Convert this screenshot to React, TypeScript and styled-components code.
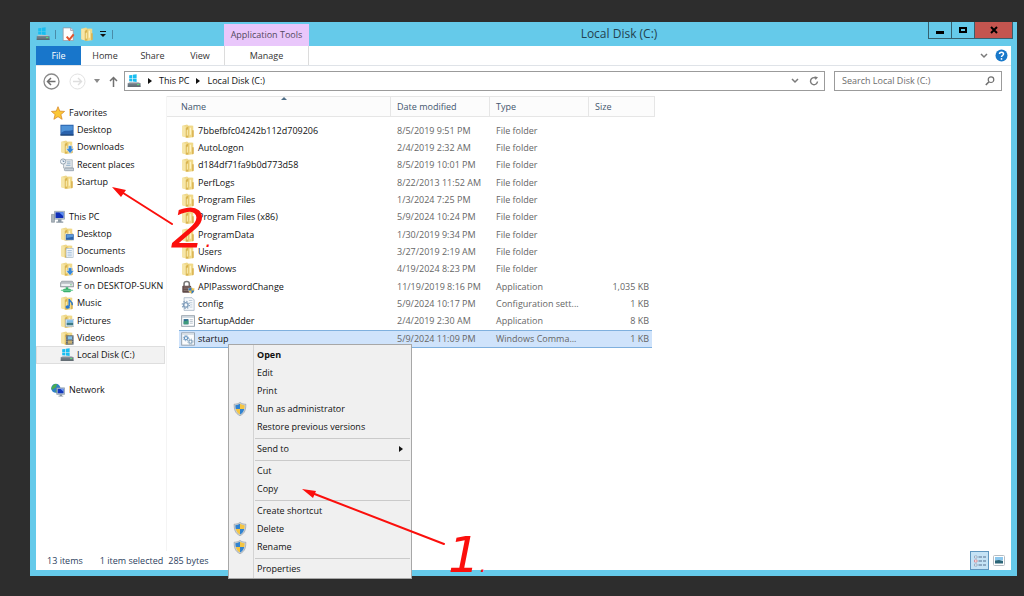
import React from 'react';
import styled, { createGlobalStyle, css } from 'styled-components';

const RED = '#fb0f0c';

const GlobalStyle = createGlobalStyle`
  * { box-sizing: border-box; }
  body {
    margin: 0;
    background: #2d2d2d;
    font-family: 'Open Sans', 'Noto Sans', sans-serif;
    font-size: 9px;
    line-height: 16px;
    color: #111;
  }
  button, input { font: inherit; color: inherit; }
  a { color: inherit; text-decoration: none; }
`;

/* ---------- icons ---------- */

type IconName =
  | 'folder' | 'desktop' | 'downloads' | 'recent' | 'pc' | 'folderDesktop' | 'documents'
  | 'netdrive' | 'music' | 'pictures' | 'videos' | 'disk' | 'network' | 'star' | 'lock'
  | 'config' | 'app' | 'batch' | 'shield' | 'props';

const FolderShape = () => (
  <g>
    <path d="M1.500 2 7 .5 8.500 2H14v13l-6 .8L1.500 14z" fill="#efd88a" />
    <path d="M1.500 2 5.500 3v12.500L1.500 14z" fill="#f6e6a8" />
    <path d="M8.500 2H13v12.500l-4.500 1z" fill="#f1d988" />
    <path d="M5.500 4.500 8.500 2.500v12.800l-3 .4z" fill="#d9b450" />
    <path d="M6.500 7 8 6v7l-1.500 .5z" fill="#f7e7a6" />
    <path d="M10 4.500 11.500 4v8l-1.500 .5z" fill="#fff3c4" />
    <path d="M12.800 7h1.700v7.700l-1.700 .3z" fill="#d8ae4a" />
  </g>
);

const DiskShape = () => (
  <g>
    <path d="M2.500 1.500 6 1v3.500H2.500zM6.700 .9 11 .3v4.200H6.700zM2.500 5.200H6v3.500l-3.500-.4zM6.700 5.200H11v4l-4.300-.5z" fill="#18bdf0" />
    <path d="M1 10.500 3 9h10l2.500 1.500z" fill="#b9bfc4" />
    <path d="M.8 10.500h14.700v4H.8z" fill="#6e7b85" />
    <path d="M.8 13.500h14.700v1H.8z" fill="#4c565e" />
    <path d="M11.500 11.500h2.500v1.200h-2.500z" fill="#5fe07a" />
  </g>
);

const shapes: Record<IconName, React.ReactNode> = {
  folder: <FolderShape />,
  desktop: (
    <g>
      <rect x=".5" y="2" width="15" height="12" fill="#2a62ad" />
      <path d="M1.500 3h13v5C10 10 6 7 1.500 11z" fill="#4f93d8" />
      <path d="M.5 13h15v1.500H.5z" fill="#1d4377" />
    </g>
  ),
  downloads: (
    <g>
      <FolderShape />
      <path d="M9.500 6.500h4V10H16l-4.500 5.500L7 10h2.500z" fill="#3686d8" stroke="#fff" strokeWidth=".5" />
    </g>
  ),
  recent: (
    <g>
      <path d="M4 2h10v9.500H4z" fill="#e3e8ec" stroke="#9aa5ae" strokeWidth=".8" />
      <path d="M5 13.500c0-2 1-2 2-2h8.500v3H6c-1 0-1-.5-1-1z" fill="#c6d0d8" stroke="#8794a0" strokeWidth=".8" />
      <circle cx="3.500" cy="4" r="3" fill="#eff5fa" stroke="#8b9aa8" />
      <path d="M3.500 2.500V4H5" fill="none" stroke="#4a6c8c" strokeWidth=".8" />
      <path d="M8 4.500h4M8 6.500h4M7 8.500h5" stroke="#87a8c4" strokeWidth=".9" />
    </g>
  ),
  pc: (
    <g>
      <path d="M.5 5h3.500v9H.5z" fill="#a9b3bb" stroke="#75818b" strokeWidth=".6" />
      <path d="M4 1.500h11.500v9H4z" fill="#c4cdd5" stroke="#6e7f90" strokeWidth=".6" />
      <path d="M5.200 2.700h9v6.500h-9z" fill="#0f2fb8" />
      <path d="M9 2.700h5.200V7z" fill="#5b8ff0" />
      <path d="M8 10.500h4V13h2v1.500H6V13h2z" fill="#8b98a4" />
    </g>
  ),
  folderDesktop: (
    <g>
      <FolderShape />
      <rect x="6.500" y="8" width="9.500" height="7" fill="#2b62a8" stroke="#e6eef6" strokeWidth=".6" />
      <path d="M7.500 9h7.500v2l-7.500 1.500z" fill="#5c9adb" />
    </g>
  ),
  documents: (
    <g>
      <FolderShape />
      <rect x="7" y="5" width="8" height="10.500" fill="#f6f9fc" stroke="#9db3c8" strokeWidth=".7" />
      <path d="M8.500 7.500h5M8.500 9.500h5M8.500 11.500h5M8.500 13.500h5" stroke="#86abcf" strokeWidth=".8" />
    </g>
  ),
  netdrive: (
    <g>
      <path d="M2 2.500h12l1.500 2v4.500H.5V4.500z" fill="#b9bfc4" stroke="#7f888f" strokeWidth=".7" />
      <path d="M1.500 5.500h13V8h-13z" fill="#eef0f2" />
      <path d="M11.500 6.200h2v1h-2z" fill="#44b85a" />
      <path d="M6.500 9.500h3v1.500h2l2 2-2 2h-7l-2-2 2-2h2z" fill="#39b06c" />
      <path d="M1 12.300h14v1.200H1z" fill="#6fd09b" />
    </g>
  ),
  music: (
    <g>
      <FolderShape />
      <path d="M10.500 3.500v8M10.500 3.500c.5 3 4.500 3 3.500 7" fill="none" stroke="#2677cf" strokeWidth="1.700" />
      <ellipse cx="8.800" cy="12.500" rx="2.500" ry="2" fill="#2677cf" />
    </g>
  ),
  pictures: (
    <g>
      <FolderShape />
      <rect x="6.500" y="6" width="9.500" height="8.500" fill="#f4f8fb" stroke="#9fb0be" strokeWidth=".7" />
      <path d="M7.500 7h7.500v3H7.500z" fill="#7dbce8" />
      <path d="M7.500 10h7.500v3H7.500z" fill="#3b7a86" />
    </g>
  ),
  videos: (
    <g>
      <FolderShape />
      <rect x="7" y="5" width="8.500" height="10.500" fill="#4a5560" />
      <rect x="8.800" y="6" width="5" height="3.800" fill="#85c1e8" />
      <rect x="8.800" y="10.800" width="5" height="3.800" fill="#c8b072" />
      <path d="M7.900 5.500v10M14.700 5.500v10" stroke="#dfe5ea" strokeWidth=".7" strokeDasharray="1 1" />
    </g>
  ),
  disk: <DiskShape />,
  network: (
    <g>
      <circle cx="5.500" cy="6" r="5.200" fill="#2f7fc9" />
      <path d="M2 3c2-2 4-2 5-1.500L5.500 5 3 6.500 1 8C0 6 1 4 2 3zM6 7l3 1-2 3-2-1z" fill="#49ad52" />
      <path d="M6.500 5.500h9v7.500h-9z" fill="#c7d0d8" stroke="#697b8d" strokeWidth=".6" />
      <path d="M7.600 6.600h6.800v5.200H7.600z" fill="#1438bd" />
      <path d="M10.500 6.600h3.900V10z" fill="#6d9bf2" />
      <path d="M10 13h2.500v1.500H14v1H8.500v-1H10z" fill="#83919e" />
    </g>
  ),
  star: (
    <path
      d="M8 .8 10 5.800 15.500 6.200 11.300 9.800 12.700 15.200 8 12.200 3.300 15.200 4.700 9.800 .5 6.200 6 5.800z"
      fill="#fbc736"
      stroke="#d98a2a"
      strokeWidth=".9"
      strokeLinejoin="round"
    />
  ),
  lock: (
    <g>
      <path d="M3.500 7V4.200C3.500 .8 9.500 .8 9.500 4.200V7" fill="none" stroke="#777" strokeWidth="1.800" />
      <rect x="1.500" y="6.500" width="10" height="8" rx="1" fill="#5f4a48" />
      <path d="M3 8h7M3 10h7M3 12h7" stroke="#9b8886" strokeWidth=".7" />
      <path d="M8.500 9.500c2 0 3-1 3.500-1.300.5.300 1.500 1.300 3.500 1.300 0 4-1.500 5.500-3.500 6.300-2-.8-3.500-2.300-3.500-6.300z" fill="#f3c544" stroke="#eee" strokeWidth=".5" />
      <path d="M12 8.500v3.500H8.700l-.2-2.500c2 0 3-.7 3.500-1zM12 12h3c-.3 2-1.500 3-3 3.700z" fill="#2f79c8" />
    </g>
  ),
  config: (
    <g>
      <path d="M3.500 .8h9l2.500 2.500v12H3.500z" fill="#f5f8fb" stroke="#9aabbb" strokeWidth=".8" />
      <path d="M9 4h4M10 6.500h3M10.500 9h2.500M10 11.500h3" stroke="#a9bccd" strokeWidth=".8" />
      <circle cx="5.500" cy="9" r="2.600" fill="none" stroke="#7f9dbb" strokeWidth="1.600" />
      <circle cx="5.500" cy="9" r="4.200" fill="none" stroke="#7f9dbb" strokeWidth="1.200" strokeDasharray="1.500 1.800" />
    </g>
  ),
  app: (
    <g>
      <rect x=".8" y="2" width="14.500" height="12" fill="#fff" stroke="#87939e" />
      <path d="M1.300 2.500h13.500v1.800H1.300z" fill="#c6d0d9" />
      <path d="M3 5.800h5.500v6H3z" fill="#2d6b8f" />
      <path d="M3 8.500 8.500 7v4.800H3z" fill="#3f9a7a" />
      <path d="M10 6.500h3.500M10 8.500h3.500M10 10.500h3.500" stroke="#9eabb7" strokeWidth=".8" />
    </g>
  ),
  batch: (
    <g>
      <rect x=".8" y="1" width="14.500" height="14" fill="#fbfcfd" stroke="#8a97a4" />
      <path d="M1.300 1.500h13.500v1.800H1.300z" fill="#d5dee6" />
      <circle cx="5.700" cy="7" r="1.800" fill="none" stroke="#6795c0" strokeWidth="1.300" />
      <circle cx="5.700" cy="7" r="3" fill="none" stroke="#6795c0" strokeWidth="1.100" strokeDasharray="1.200 1.200" />
      <circle cx="10.800" cy="11" r="1.800" fill="none" stroke="#7f9fba" strokeWidth="1.300" />
      <circle cx="10.800" cy="11" r="3" fill="none" stroke="#7f9fba" strokeWidth="1.100" strokeDasharray="1.200 1.200" />
    </g>
  ),
  shield: (
    <g>
      <path d="M8 .5c-2 1.500-4 2-6.700 2C1.300 9 2.500 13 8 15.700 13.500 13 14.700 9 14.700 2.500 12 2.500 10 2 8 .5z" fill="#cdd3d8" stroke="#8d979f" strokeWidth=".7" />
      <path d="M8 2C6.300 3 4.800 3.500 2.700 3.700c.1 1.600.2 2.900.500 4.300H8z" fill="#3183d0" />
      <path d="M8 2c1.700 1 3.200 1.500 5.300 1.700-.1 1.600-.2 2.900-.5 4.300H8z" fill="#f4c542" />
      <path d="M3.200 8H8v6.300C5.200 12.800 3.900 11 3.200 8z" fill="#f4c542" />
      <path d="M12.800 8H8v6.300c2.800-1.500 4.100-3.300 4.800-6.300z" fill="#3183d0" />
    </g>
  ),
  props: (
    <g>
      <path d="M2.500 1h8.500l3 3v11.500H2.500z" fill="#fdfdfd" stroke="#9a8f98" strokeWidth=".8" />
      <path d="M11 1v3h3" fill="#dde" stroke="#9a8f98" strokeWidth=".8" />
      <path d="m6.500 11 3 3.500 5-6" fill="none" stroke="#e0542f" strokeWidth="2.300" />
    </g>
  ),
};

const Svg = styled.svg`
  display: block;
  flex: none;
`;

const Icon = ({ name, size = 14 }: { name: IconName; size?: number }) => (
  <Svg width={size} height={size} viewBox="0 0 16 16" aria-hidden="true">{shapes[name]}</Svg>
);

/* ---------- window frame ---------- */

const Screen = styled.div`
  position: relative;
  display: flex;
  min-height: 100vh;
  padding: 22px 7px 20px 30px;
  background: #2d2d2d;
`;

const Window = styled.main`
  flex: 1;
  min-width: 0;
  display: flex;
  flex-direction: column;
  padding: 0 6px 6px;
  background: #65caea;
`;

const TitleBar = styled.header`
  display: grid;
  grid-template-columns: 188px 1fr auto;
  height: 24px;
  margin-right: -2px;
`;

const QuickAccess = styled.div`
  display: flex;
  align-items: center;
  gap: 5px;
`;

const Divider = styled.span`
  width: 1px;
  height: 9px;
  background: #4a8ca8;
`;

const PlainButton = styled.button`
  display: flex;
  align-items: center;
  justify-content: center;
  padding: 0;
  border: 0;
  background: none;
`;

const TitleArea = styled.div`
  display: flex;
`;

const ToolsTab = styled.div`
  width: 85px;
  margin-top: 2px;
  line-height: 22px;
  text-align: center;
  background: #e9c7fb;
  color: #54495f;
`;

const Title = styled.h1`
  flex: 1;
  margin: 0;
  font-size: 12px;
  font-weight: 400;
  line-height: 23px;
  text-align: center;
  color: #24424f;
`;

const WindowButtons = styled.div`
  display: flex;
  align-items: flex-start;
`;

const WindowButton = styled.button<{ $close?: boolean }>`
  display: flex;
  align-items: center;
  justify-content: center;
  width: ${p => (p.$close ? 39 : 24)}px;
  height: 17px;
  margin-left: -1px;
  padding: 0;
  border: 1px solid #35606f;
  border-top: 0;
  background: ${p => (p.$close ? '#c4554f' : '#65caea')};
`;

const Ribbon = styled.nav`
  display: flex;
  height: 20px;
  border-bottom: 1px solid #dfe3e8;
  background: #fff;
`;

const RibbonTab = styled.button<{ $kind?: 'file' | 'tools'; $w: number }>`
  width: ${p => p.$w}px;
  padding: 0;
  border: 0;
  background: none;
  text-align: center;
  line-height: 20px;
  color: #333;
  ${p => p.$kind === 'file' && css`background: #1876cb; color: #fff;`}
  ${p => p.$kind === 'tools' && css`
    border: 0 solid #dcdcdc;
    border-width: 0 1px;
  `}
`;

const RibbonEnd = styled.div`
  display: flex;
  align-items: center;
  gap: 7px;
  margin-left: auto;
  padding-right: 3px;
`;

const Client = styled.section`
  flex: 1;
  display: flex;
  flex-direction: column;
  background: #fff;
`;

const AddressRow = styled.div`
  display: flex;
  align-items: center;
  height: 30px;
  padding: 0 9px 0 7px;
`;

const NavButtons = styled.div`
  display: flex;
  align-items: center;
  justify-content: space-between;
  width: 75px;
  margin-right: 6px;
`;

const AddressBar = styled.div`
  flex: 1;
  display: flex;
  align-items: center;
  height: 20px;
  padding: 0 5px 0 2px;
  border: 1px solid #9b9b9b;
`;

const Crumb = styled.button`
  padding: 0;
  border: 0;
  background: none;
  line-height: 18px;
`;

const CrumbArrow = styled.span`
  margin: 0 7px;
  border: 3px solid transparent;
  border-right: 0;
  border-left: 4px solid #111;
`;

const AddressEnd = styled.div`
  display: flex;
  gap: 10px;
  margin-left: auto;
`;

const SearchBox = styled.label`
  display: flex;
  align-items: center;
  width: 168px;
  height: 20px;
  margin-left: 9px;
  padding: 0 6px 0 7px;
  border: 1px solid #9b9b9b;
`;

const SearchInput = styled.input`
  flex: 1;
  min-width: 0;
  padding: 0;
  border: 0;
  outline: 0;
  background: none;
  &::placeholder { color: #6c6c6c; opacity: 1; }
`;

/* ---------- panes ---------- */

const Panes = styled.div`
  flex: 1;
  display: flex;
`;

const Sidebar = styled.nav`
  width: 131px;
  padding-top: 8px;
  border-right: 1px solid #f4f4f4;
`;

const NavList = styled.ul`
  margin: 0;
  padding: 0;
  list-style: none;
`;

const NavItem = styled.li<{ $level: number; $selected?: boolean }>`
  height: 17px;
  margin-right: 1px;
  &:nth-child(3n) { height: 18px; }
  a {
    display: flex;
    align-items: center;
    gap: ${p => (p.$level ? 3 : 4)}px;
    height: 100%;
    padding-left: ${p => (p.$level ? 24 : 15)}px;
    overflow: hidden;
    white-space: nowrap;
    ${p => p.$selected && css`
      background: #f2f2f2;
      box-shadow: inset 0 0 0 1px #dedede;
    `}
  }
`;

const FilePane = styled.section`
  flex: 1;
  min-width: 0;
`;

const FileTable = styled.table`
  width: 488px;
  table-layout: fixed;
  border-collapse: separate;
  border-spacing: 0;
  tbody::before {
    content: '';
    display: block;
    height: 5px;
  }
`;

const HeadCell = styled.th<{ $sorted?: boolean }>`
  position: relative;
  height: 21px;
  padding: 0 5px 0 6px;
  border: 0 solid #e6e6e6;
  border-width: 1px 1px 1px 0;
  background: #fcfcfc;
  font-weight: 400;
  text-align: left;
  color: #43566e;
  ${p => p.$sorted && css`
    padding-left: 14px;
    &::before {
      content: '';
      position: absolute;
      top: 0;
      left: 51%;
      border: 3px solid transparent;
      border-top: 0;
      border-bottom-color: #4e6e88;
    }
  `}
`;

const FileRow = styled.tr<{ $selected?: boolean }>`
  td { height: 17px; }
  &:nth-child(3n) td { height: 18px; }
  ${p => p.$selected && css`
    && td:not(:first-child):not(:last-child) {
      height: 18px;
      background: #cfe3fb;
      box-shadow: inset 0 1px #7fb0de, inset 0 -1px #7fb0de;
    }
    && td:nth-child(2) { box-shadow: inset 1px 1px #7fb0de, inset 0 -1px #7fb0de; }
    && td:nth-child(5) { box-shadow: inset -1px 1px #7fb0de, inset 0 -1px #7fb0de; }
  `}
`;

const Cell = styled.td<{ $right?: boolean }>`
  padding: 0 ${p => (p.$right ? 3 : 2)}px 0 6px;
  overflow: hidden;
  line-height: 16px;
  white-space: nowrap;
  text-overflow: ellipsis;
  text-align: ${p => (p.$right ? 'right' : 'left')};
  color: #666;
`;

const EdgeCell = styled.td`
  padding: 0;
`;

const FileName = styled.div`
  display: flex;
  align-items: center;
  gap: 3px;
  margin-left: -4px;
  color: #111;
`;

const StatusBar = styled.footer`
  display: flex;
  align-items: center;
  height: 19px;
  padding: 0 3px 0 11px;
  color: #2c4160;
`;

const StatusText = styled.span<{ $gap: number }>`
  margin-right: ${p => p.$gap}px;
`;

const ViewButtons = styled.div`
  display: flex;
  margin-left: auto;
`;

const ViewButton = styled.button<{ $active?: boolean }>`
  display: flex;
  align-items: center;
  justify-content: center;
  width: 19px;
  height: 19px;
  padding: 0;
  border: 1px solid ${p => (p.$active ? '#5f97bf' : 'transparent')};
  background: ${p => (p.$active ? '#c5e3f5' : 'none')};
`;

/* ---------- context menu and annotations ---------- */

const Menu = styled.div`
  position: absolute;
  top: 344px;
  left: 228px;
  width: 184px;
  padding: 1px 1px 0;
  border: 1px solid #a7a7a7;
  background: linear-gradient(90deg, #f0f0f0 24px, #d4d4d4 24px, #d4d4d4 25px, #f0f0f0 25px);
`;

const MenuItem = styled.button<{ $bold?: boolean }>`
  display: grid;
  grid-template-columns: 27px 1fr auto;
  align-items: center;
  width: 100%;
  height: 18px;
  padding: 0 7px 0 0;
  border: 0;
  background: none;
  text-align: left;
  font-weight: ${p => (p.$bold ? 700 : 400)};
`;

const MenuIcon = styled.span`
  padding-left: 3px;
`;

const MenuLine = styled.hr`
  height: 1px;
  margin: 2px 0 1px 25px;
  border: 0;
  background: #cacaca;
`;

const Annotations = styled.svg`
  position: absolute;
  top: 0;
  left: 0;
  pointer-events: none;
  font-family: 'DejaVu Sans', sans-serif;
  font-style: italic;
`;

/* ---------- data ---------- */

const navRows: ([string, IconName, number] | null)[] = [
  ['Favorites', 'star', 0],
  ['Desktop', 'desktop', 1],
  ['Downloads', 'downloads', 1],
  ['Recent places', 'recent', 1],
  ['Startup', 'folder', 1],
  null,
  ['This PC', 'pc', 0],
  ['Desktop', 'folderDesktop', 1],
  ['Documents', 'documents', 1],
  ['Downloads', 'downloads', 1],
  ['F on DESKTOP-SUKN', 'netdrive', 1],
  ['Music', 'music', 1],
  ['Pictures', 'pictures', 1],
  ['Videos', 'videos', 1],
  ['Local Disk (C:)', 'disk', 1],
  null,
  ['Network', 'network', 0],
];

const files: [string, IconName, string, string, string][] = [
  ['7bbefbfc04242b112d709206', 'folder', '8/5/2019 9:51 PM', 'File folder', ''],
  ['AutoLogon', 'folder', '2/4/2019 2:32 AM', 'File folder', ''],
  ['d184df71fa9b0d773d58', 'folder', '8/5/2019 10:01 PM', 'File folder', ''],
  ['PerfLogs', 'folder', '8/22/2013 11:52 AM', 'File folder', ''],
  ['Program Files', 'folder', '1/3/2024 7:25 PM', 'File folder', ''],
  ['Program Files (x86)', 'folder', '5/9/2024 10:24 PM', 'File folder', ''],
  ['ProgramData', 'folder', '1/30/2019 9:34 PM', 'File folder', ''],
  ['Users', 'folder', '3/27/2019 2:19 AM', 'File folder', ''],
  ['Windows', 'folder', '4/19/2024 8:23 PM', 'File folder', ''],
  ['APIPasswordChange', 'lock', '11/19/2019 8:16 PM', 'Application', '1,035 KB'],
  ['config', 'config', '5/9/2024 10:17 PM', 'Configuration sett...', '1 KB'],
  ['StartupAdder', 'app', '2/4/2019 2:30 AM', 'Application', '8 KB'],
  ['startup', 'batch', '5/9/2024 11:09 PM', 'Windows Comma...', '1 KB'],
];

const menuGroups: string[][] = [
  ['Open', 'Edit', 'Print', 'Run as administrator', 'Restore previous versions'],
  ['Send to'],
  ['Cut', 'Copy'],
  ['Create shortcut', 'Delete', 'Rename'],
  ['Properties'],
];
const shielded = ['Run as administrator', 'Delete', 'Rename'];

const Chevron = () => (
  <Svg width="8" height="6" viewBox="0 0 8 6" aria-hidden="true">
    <path d="m1 1 3 3 3-3" fill="none" stroke="#7a7a7a" strokeWidth="1.500" />
  </Svg>
);

export default function App() {
  return (
    <Screen>
      <GlobalStyle />
      <Window>
        <TitleBar>
          <QuickAccess>
            <Icon name="disk" />
            <Divider />
            <PlainButton aria-label="Properties"><Icon name="props" /></PlainButton>
            <PlainButton aria-label="New folder"><Icon name="folder" /></PlainButton>
            <PlainButton aria-label="Customize toolbar">
              <Svg width="8" height="8" viewBox="0 0 8 8">
                <path d="M1 1.500h6" stroke="#111" />
                <path d="M1 4h6L4 7z" fill="#111" />
              </Svg>
            </PlainButton>
            <Divider />
          </QuickAccess>
          <TitleArea>
            <ToolsTab>Application Tools</ToolsTab>
            <Title>Local Disk (C:)</Title>
          </TitleArea>
          <WindowButtons>
            <WindowButton aria-label="Minimize">
              <Svg width="10" height="9"><path d="M1 5h8v3H1z" fill="#000" /></Svg>
            </WindowButton>
            <WindowButton aria-label="Maximize">
              <Svg width="10" height="8"><rect x="2" y="2" width="6" height="4" fill="none" stroke="#000" strokeWidth="2" /></Svg>
            </WindowButton>
            <WindowButton $close aria-label="Close">
              <Svg width="8" height="8"><path d="m1 1 6 6M7 1 1 7" stroke="#000" strokeWidth="2" /></Svg>
            </WindowButton>
          </WindowButtons>
        </TitleBar>

        <Ribbon>
          <RibbonTab $kind="file" $w={45}>File</RibbonTab>
          <RibbonTab $w={48}>Home</RibbonTab>
          <RibbonTab $w={47}>Share</RibbonTab>
          <RibbonTab $w={48}>View</RibbonTab>
          <RibbonTab $kind="tools" $w={85}>Manage</RibbonTab>
          <RibbonEnd>
            <PlainButton aria-label="Expand ribbon"><Chevron /></PlainButton>
            <PlainButton aria-label="Help">
              <Svg width="13" height="13" viewBox="0 0 13 13">
                <circle cx="6.500" cy="6.500" r="6" fill="#1979ca" />
                <path d="M4.500 5c0-2.500 4-2.500 4 0 0 1.500-2 1.500-2 3" fill="none" stroke="#fff" strokeWidth="1.500" />
                <circle cx="6.500" cy="9.900" r=".9" fill="#fff" />
              </Svg>
            </PlainButton>
          </RibbonEnd>
        </Ribbon>

        <Client>
          <AddressRow>
            <NavButtons>
              <PlainButton aria-label="Back">
                <Svg width="17" height="17" viewBox="0 0 17 17">
                  <circle cx="8.500" cy="8.500" r="7.500" fill="#fff" stroke="#8a8a8a" strokeWidth="1.300" />
                  <path d="M12.500 8.500H5M8 5 4.500 8.500 8 12" fill="none" stroke="#6e6e6e" strokeWidth="1.500" />
                </Svg>
              </PlainButton>
              <PlainButton aria-label="Forward">
                <Svg width="17" height="17" viewBox="0 0 17 17">
                  <circle cx="8.500" cy="8.500" r="7.500" fill="#fff" stroke="#e2e2e2" />
                  <path d="M4 8.500h8M9 5l3.500 3.500L9 12" fill="none" stroke="#dedede" strokeWidth="1.400" />
                </Svg>
              </PlainButton>
              <PlainButton aria-label="Recent locations">
                <Svg width="6" height="4"><path d="M0 0h6L3 4z" fill="#8a8a8a" /></Svg>
              </PlainButton>
              <PlainButton aria-label="Up">
                <Svg width="9" height="11" viewBox="0 0 9 11">
                  <path d="M4.500 11V1.500M1 5l3.500-3.500L8 5" fill="none" stroke="#707070" strokeWidth="1.500" />
                </Svg>
              </PlainButton>
            </NavButtons>
            <AddressBar>
              <Icon name="disk" />
              <CrumbArrow />
              <Crumb>This PC</Crumb>
              <CrumbArrow />
              <Crumb>Local Disk (C:)</Crumb>
              <AddressEnd>
                <PlainButton aria-label="Previous locations"><Chevron /></PlainButton>
                <PlainButton aria-label="Refresh">
                  <Svg width="10" height="10" viewBox="0 0 10 10">
                    <path d="M8.500 5.500A3.500 3.500 0 1 1 6.500 2" fill="none" stroke="#7a7a7a" strokeWidth="1.400" />
                    <path d="M5.500 .2 9 1.200 6.500 4z" fill="#7a7a7a" />
                  </Svg>
                </PlainButton>
              </AddressEnd>
            </AddressBar>
            <SearchBox>
              <SearchInput type="text" placeholder="Search Local Disk (C:)" aria-label="Search Local Disk (C:)" />
              <Svg width="10" height="10" viewBox="0 0 10 10" aria-hidden="true">
                <circle cx="6" cy="3.700" r="2.800" fill="none" stroke="#6f6f6f" strokeWidth="1.200" />
                <path d="M4 5.800 .8 9" stroke="#6f6f6f" strokeWidth="1.600" />
              </Svg>
            </SearchBox>
          </AddressRow>

          <Panes>
            <Sidebar aria-label="Folders">
              <NavList>
                {navRows.map((row, i) => (
                  <NavItem key={i} $level={row ? row[2] : 0} $selected={i === 14}>
                    {row && <a href="#"><Icon name={row[1]} />{row[0]}</a>}
                  </NavItem>
                ))}
              </NavList>
            </Sidebar>

            <FilePane>
              <FileTable>
                <colgroup>
                  <col width="12" />
                  <col width="212" />
                  <col width="99" />
                  <col width="99" />
                  <col width="63" />
                  <col width="3" />
                </colgroup>
                <thead>
                  <tr>
                    <HeadCell colSpan={2} $sorted>Name</HeadCell>
                    <HeadCell>Date modified</HeadCell>
                    <HeadCell>Type</HeadCell>
                    <HeadCell colSpan={2}>Size</HeadCell>
                  </tr>
                </thead>
                <tbody>
                  {files.map(([name, icon, date, type, size]) => (
                    <FileRow key={name} $selected={name === 'startup'}>
                      <EdgeCell />
                      <Cell><FileName><Icon name={icon} />{name}</FileName></Cell>
                      <Cell>{date}</Cell>
                      <Cell>{type}</Cell>
                      <Cell $right>{size}</Cell>
                      <EdgeCell />
                    </FileRow>
                  ))}
                </tbody>
              </FileTable>
            </FilePane>
          </Panes>

          <StatusBar>
            <StatusText $gap={17}>13 items</StatusText>
            <StatusText $gap={5}>1 item selected</StatusText>
            <StatusText $gap={0}>285 bytes</StatusText>
            <ViewButtons>
              <ViewButton $active aria-label="Details view">
                <Svg width="14" height="14" viewBox="0 0 14 14">
                  <path d="M1.500 2h2.500v2H1.500zM1.500 10h2.500v2H1.500z" fill="#fff" stroke="#8296b0" strokeWidth=".7" />
                  <path d="M1.500 6h2.500v2H1.500z" fill="#fff" stroke="#d2707a" strokeWidth=".7" />
                  <path d="M5.500 3H9M10 3h3M5.500 7H9M10 7h3M5.500 11H9M10 11h3" stroke="#56708f" strokeWidth="1.200" />
                </Svg>
              </ViewButton>
              <ViewButton aria-label="Thumbnail view">
                <Svg width="12" height="11" viewBox="0 0 12 11">
                  <rect x=".5" y=".5" width="11" height="10" rx="1" fill="#fff" stroke="#b5bcc2" />
                  <path d="M2 2h8v3.500H2z" fill="#8cc8ee" />
                  <path d="M2 5.500 6 5l4 1v2.500H2z" fill="#2b6577" />
                </Svg>
              </ViewButton>
            </ViewButtons>
          </StatusBar>
        </Client>
      </Window>

      <Menu role="menu">
        {menuGroups.map((group, g) => (
          <React.Fragment key={g}>
            {g > 0 && <MenuLine />}
            {group.map(label => (
              <MenuItem key={label} role="menuitem" $bold={label === 'Open'}>
                <MenuIcon>{shielded.includes(label) && <Icon name="shield" />}</MenuIcon>
                {label}
                {label === 'Send to' && (
                  <Svg width="4" height="6" aria-hidden="true"><path d="M0 0v6l4-3z" fill="#111" /></Svg>
                )}
              </MenuItem>
            ))}
          </React.Fragment>
        ))}
      </Menu>

      <Annotations width="500" height="590">
        <path d="M172 224 120 191M444 544 312 493" fill="none" stroke={RED} strokeWidth="2" strokeLinecap="round" />
        <path d="m112 187 14 3-5 7zM302 489l14 2-3 7z" fill={RED} />
        <text x="171" y="247" fontSize="54" fill={RED}>2<tspan fontSize="20">.</tspan></text>
        <text x="448" y="572" fontSize="50" fill={RED}>1<tspan fontSize="20">.</tspan></text>
      </Annotations>
    </Screen>
  );
}
